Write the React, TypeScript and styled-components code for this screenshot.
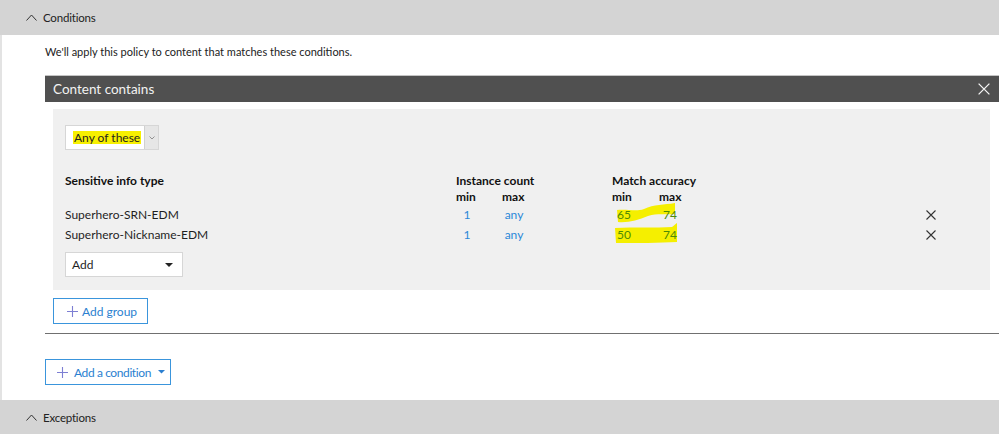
import React from "react";
import styled, { createGlobalStyle } from "styled-components";

const GlobalStyle = createGlobalStyle`
  html, body { margin: 0; padding: 0; background: #ffffff; }
  body { font-family: Lato, "Noto Sans", Arial, sans-serif; color: #1f1f1f; }
  * { box-sizing: border-box; }
  svg { flex-shrink: 0; }
`;

const Page = styled.div`
  width: 999px;
  height: 434px;
  display: flex;
  flex-direction: column;
  overflow: hidden;
  white-space: nowrap;
`;

const SectionHeader = styled.div<{ h: number }>`
  height: ${(p) => p.h}px;
  flex: none;
  background: #d4d4d4;
  display: flex;
  align-items: center;
  padding-left: 26px;
  gap: 6px;
  font-size: 11.5px;
  letter-spacing: -0.2px;
  color: #222;
`;

const Body = styled.div`
  flex: 1;
  border-left: 2px solid #e3e3e3;
  padding: 9px 0 0 43px;
  display: flex;
  flex-direction: column;
`;

const Description = styled.div`
  font-size: 11px;
  line-height: 16px;
  color: #222;
`;

const Card = styled.div`
  margin-top: 15px;
  display: flex;
  flex-direction: column;
`;

const DarkBar = styled.div`
  height: 27px;
  background: #505050;
  border-top: 1px solid #c4c4c4;
  display: flex;
  align-items: center;
  justify-content: space-between;
  padding: 0 9px 0 8px;
  color: #f2f2f2;
  font-size: 13.5px;
`;

const Panel = styled.div`
  margin: 7px 9px 0 8px;
  background: #f0f0f0;
  padding: 16px 12px 13px 12px;
  display: flex;
  flex-direction: column;
`;

const Select = styled.div`
  width: 94px;
  height: 25px;
  display: flex;
  background: #fff;
  border: 1px solid #d6d6d6;
`;

const SelectText = styled.div`
  flex: 1;
  display: flex;
  align-items: center;
  padding-left: 7px;
  font-size: 12px;
`;

const Highlight = styled.span`
  background: #f7f000;
  padding: 0 1px;
  line-height: 13px;
`;

const SelectArrow = styled.div`
  width: 14px;
  background: #e6e6e6;
  border-left: 1px solid #d0d0d0;
  display: flex;
  align-items: center;
  justify-content: center;
`;

const Grid = styled.div`
  margin-top: 23px;
  display: grid;
  grid-template-columns: 391px 46px 110px 47px 267px 12px;
  font-size: 12px;
  line-height: 16px;
  position: relative;
`;

const HeadCell = styled.div<{ span?: number }>`
  font-weight: 700;
  grid-column: span ${(p) => p.span ?? 1};
  color: #111;
`;

const SubHead = styled.div`
  font-weight: 700;
  color: #111;
`;

const Cell = styled.div<{ top: number }>`
  margin-top: ${(p) => p.top}px;
  display: flex;
  align-items: center;
`;

const Value = styled.span<{ w: number; marked?: boolean }>`
  position: relative;
  display: inline-block;
  width: ${(p) => p.w}px;
  text-align: center;
  color: ${(p) => (p.marked ? "#4f8a06" : "#2b88d8")};
`;

const Marker = styled.svg`
  position: absolute;
  pointer-events: none;
`;

const AddSelect = styled.div`
  margin-top: 9px;
  width: 118px;
  height: 25px;
  background: #fff;
  border: 1px solid #d6d6d6;
  display: flex;
  align-items: center;
  justify-content: space-between;
  padding: 0 9px 0 6px;
  font-size: 12px;
`;

const OutlineButton = styled.div<{ w: number; ml: number; mt: number; pl: number }>`
  margin-top: ${(p) => p.mt}px;
  margin-left: ${(p) => p.ml}px;
  width: ${(p) => p.w}px;
  height: 26px;
  border: 1px solid #3a95dc;
  display: flex;
  align-items: center;
  padding-left: ${(p) => p.pl}px;
  color: #2b7fd0;
  font-size: 12px;
`;

const ButtonLabel = styled.span<{ ml: number; mr: number; ls?: number }>`
  margin-left: ${(p) => p.ml}px;
  margin-right: ${(p) => p.mr}px;
  letter-spacing: ${(p) => p.ls ?? 0}px;
`;

const Divider = styled.div`
  margin-top: 9px;
  height: 1px;
  background: #707070;
`;

const Chevron = () => (
  <svg width="11" height="7" viewBox="0 0 11 7">
    <path d="M0.5 6.5 L5.5 1 L10.5 6.5" fill="none" stroke="#333" strokeWidth="1" />
  </svg>
);

const Cross = ({ size, color }: { size: number; color: string }) => (
  <svg width={size} height={size} viewBox="0 0 10 10">
    <path d="M0.5 0.5 L9.5 9.5 M9.5 0.5 L0.5 9.5" stroke={color} strokeWidth="1.1" />
  </svg>
);

const Plus = ({ size }: { size: number }) => (
  <svg width={size} height={size} viewBox="0 0 12 12">
    <path d="M6 0 V12 M0 6 H12" stroke="#7d7fd3" strokeWidth="1.2" />
  </svg>
);

const Caret = () => (
  <svg width="8" height="4" viewBox="0 0 8 4">
    <path d="M0 0 H8 L4 4 Z" fill="#222" />
  </svg>
);

const SmallCaret = () => (
  <svg width="7" height="4" viewBox="0 0 7 4">
    <path d="M0 0 H7 L3.5 3.5 Z" fill="#2b7fd0" />
  </svg>
);

const rows = [
  { name: "Superhero-SRN-EDM", imin: "1", imax: "any", mmin: "65", mmax: "74" },
  { name: "Superhero-Nickname-EDM", imin: "1", imax: "any", mmin: "50", mmax: "74" },
];

export default function App() {
  return (
    <Page>
      <GlobalStyle />
      <SectionHeader h={35}>
        <Chevron />
        <span>Conditions</span>
      </SectionHeader>
      <Body>
        <Description>We'll apply this policy to content that matches these conditions.</Description>
        <Card>
          <DarkBar>
            <span>Content contains</span>
            <Cross size={12} color="#f4f4f4" />
          </DarkBar>
          <Panel>
            <Select>
              <SelectText>
                <Highlight>Any of these</Highlight>
              </SelectText>
              <SelectArrow>
                <svg width="6" height="4" viewBox="0 0 6 4">
                  <path d="M0.5 0.5 L3 3 L5.5 0.5" fill="none" stroke="#888" strokeWidth="0.9" />
                </svg>
              </SelectArrow>
            </Select>
            <Grid>
              <Marker width="70" height="50" viewBox="0 0 70 50" style={{ left: 549, top: 28 }}>
                <path
                  d="M3 9 C14 8 22 11 30 8 C40 3 50 4 61 2 L61 13 C50 14 44 12 34 15 C24 19 14 22 4 21 Z"
                  fill="#f5ef00"
                />
                <path
                  d="M1 27 C20 26 42 27 58 26 C60 25 61 23 63 22 L63 41 C46 42 22 42 2 42 Z"
                  fill="#f5ef00"
                />
              </Marker>
              <HeadCell>Sensitive info type</HeadCell>
              <HeadCell span={2}>Instance count</HeadCell>
              <HeadCell span={2}>Match accuracy</HeadCell>
              <div />
              <div />
              <SubHead>min</SubHead>
              <SubHead>max</SubHead>
              <SubHead>min</SubHead>
              <SubHead>max</SubHead>
              <div />
              {rows.map((r, i) => {
                const t = i === 0 ? 2 : 4;
                return (
                  <React.Fragment key={r.name}>
                    <Cell top={t}>{r.name}</Cell>
                    <Cell top={t}><Value w={22}>{r.imin}</Value></Cell>
                    <Cell top={t}><Value w={24}>{r.imax}</Value></Cell>
                    <Cell top={t}><Value w={24} marked>{r.mmin}</Value></Cell>
                    <Cell top={t}><Value w={22} marked>{r.mmax}</Value></Cell>
                    <Cell top={t}><Cross size={10} color="#333" /></Cell>
                  </React.Fragment>
                );
              })}
            </Grid>
            <AddSelect>
              <span>Add</span>
              <Caret />
            </AddSelect>
          </Panel>
          <OutlineButton w={95} ml={8} mt={8} pl={13}>
            <Plus size={11} />
            <ButtonLabel ml={4} mr={0}>Add group</ButtonLabel>
          </OutlineButton>
          <Divider />
        </Card>
        <OutlineButton w={126} ml={0} mt={25} pl={11}>
          <Plus size={11} />
          <ButtonLabel ml={6} mr={7} ls={-0.4}>Add a condition</ButtonLabel>
          <SmallCaret />
        </OutlineButton>
      </Body>
      <SectionHeader h={34}>
        <Chevron />
        <span>Exceptions</span>
      </SectionHeader>
    </Page>
  );
}
